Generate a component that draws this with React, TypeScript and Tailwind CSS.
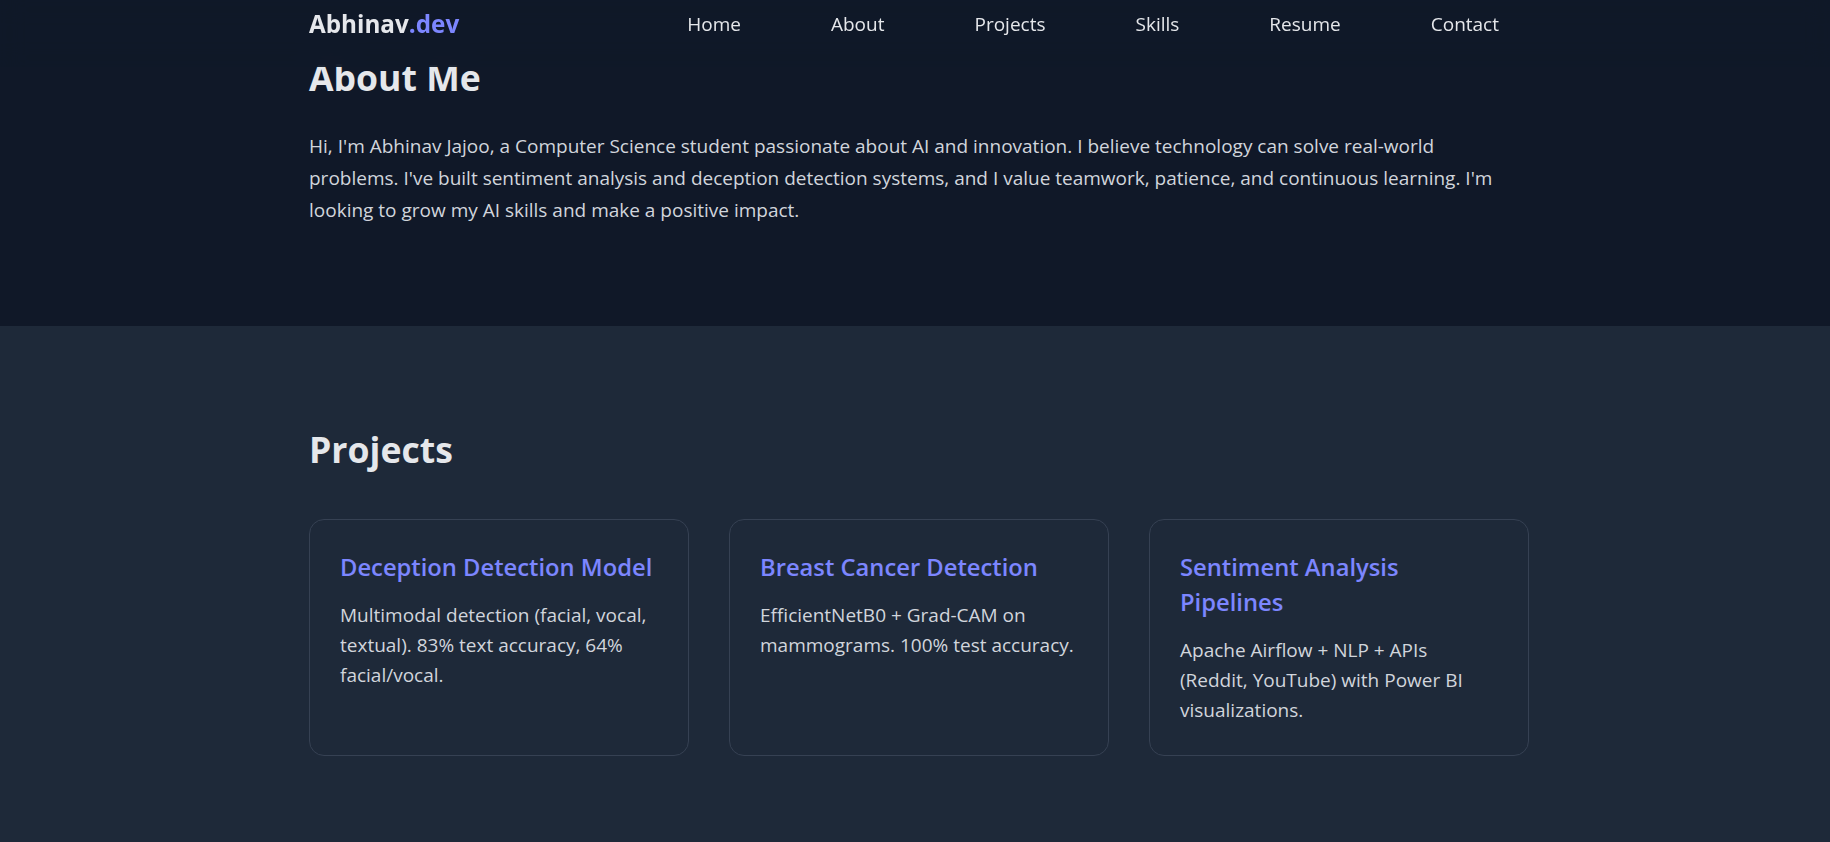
import React from 'react'

const links = ['Home', 'About', 'Projects', 'Skills', 'Resume', 'Contact']

const projects = [
  {
    title: 'Deception Detection Model',
    body: 'Multimodal detection (facial, vocal, textual). 83% text accuracy, 64% facial/vocal.',
  },
  {
    title: 'Breast Cancer Detection',
    body: 'EfficientNetB0 + Grad-CAM on mammograms. 100% test accuracy.',
  },
  {
    title: 'Sentiment Analysis Pipelines',
    body: 'Apache Airflow + NLP + APIs (Reddit, YouTube) with Power BI visualizations.',
  },
]

export default function App() {
  return (
    <div className="min-h-screen bg-gray-800 text-gray-200 font-['Open_Sans',sans-serif]">
      {/* ── Header fijo ── */}
      <header className="fixed inset-x-0 top-0 z-10 h-[67px] bg-gray-900/90 backdrop-blur-md">
        <div className="mx-auto flex max-w-[1228px] items-start justify-between pl-2 pt-[6px]">
          <a href="#" className="text-[24.25px] font-bold leading-[35px] text-gray-200">
            Abhinav<span className="text-indigo-400">.dev</span>
          </a>
          <nav className="mt-[3px] flex gap-[30px]">
            {links.map((l) => (
              <a key={l} href="#" className="px-[30px] text-[19px] leading-[30px] text-gray-200">
                {l}
              </a>
            ))}
          </nav>
        </div>
      </header>

      {/* ── About ── */}
      <section className="bg-gray-900 pt-[55px] pb-[100px]">
        <div className="mx-auto max-w-[1228px] pl-2">
          <h2 className="mb-[30px] text-[35.6px] font-bold leading-[45px] text-gray-200">About Me</h2>
          <p className="max-w-[1205px] text-[19px] leading-[32px] text-gray-300">
            Hi, I'm Abhinav Jajoo, a Computer Science student passionate about AI and innovation. I believe
            technology can solve real-world problems. I've built sentiment analysis and deception detection
            systems, and I value teamwork, patience, and continuous learning. I'm looking to grow my AI skills
            and make a positive impact.
          </p>
        </div>
      </section>

      {/* ── Projects ── */}
      <section className="bg-gray-800 pt-[101px] pb-[100px]">
        <div className="mx-auto max-w-[1228px] pl-2">
          <h2 className="mb-[47px] text-[35.6px] font-bold leading-[45px] text-gray-200">Projects</h2>
          <div className="grid grid-cols-3 gap-[40px]">
            {projects.map((p) => (
              <div key={p.title} className="rounded-[15px] border border-gray-700 bg-gray-800 p-[30px]">
                <h3 className="mb-[15px] text-[23.75px] font-semibold leading-[35px] text-indigo-400">
                  {p.title}
                </h3>
                <p className="text-[19px] leading-[30px] text-gray-300">{p.body}</p>
              </div>
            ))}
          </div>
        </div>
      </section>
    </div>
  )
}
